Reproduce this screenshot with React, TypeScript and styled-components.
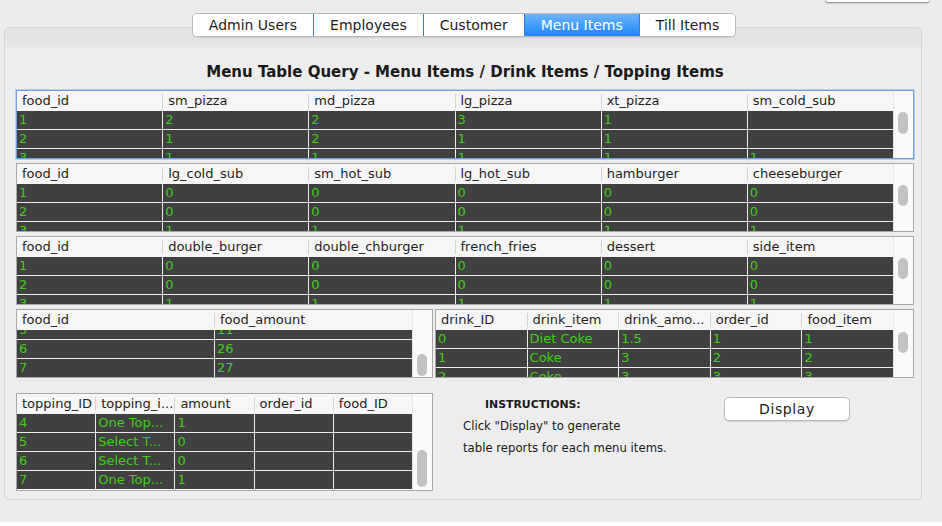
import React from "react";
import styled, { createGlobalStyle } from "styled-components";

const GlobalStyle = createGlobalStyle`
  html, body { margin: 0; padding: 0; }
  body { background: #ffffff; font-family: "DejaVu Sans", Verdana, sans-serif; }
  * { box-sizing: border-box; }
`;

const Window = styled.div`
  width: 942px;
  height: 522px;
  background: #ececec;
  display: flex;
  flex-direction: column;
  padding: 0 12px 22px 4px;
  overflow: hidden;
`;

const TopStrip = styled.div`
  flex: none;
  height: 13px;
  display: flex;
  justify-content: flex-end;
`;

const CutButton = styled.div`
  width: 105px;
  height: 3px;
  background: #ffffff;
  border-bottom: 1px solid #9c9c9c;
  border-left: 1px solid #c4c4c4;
  border-right: 1px solid #c4c4c4;
  border-radius: 0 0 4px 4px;
  box-shadow: 0 1px 1px rgba(0, 0, 0, 0.12);
`;

const TabBar = styled.div`
  flex: none;
  display: flex;
  justify-content: center;
  position: relative;
  z-index: 1;
  height: 24px;
  margin-right: 6px;
`;

const TabGroup = styled.div`
  display: flex;
  background: #ffffff;
  border: 1px solid #b8b8b8;
  border-radius: 5px;
  overflow: hidden;
  box-shadow: 0 1px 1px rgba(0, 0, 0, 0.08);
`;

const Tab = styled.div<{ $active?: boolean }>`
  display: flex;
  align-items: center;
  padding: 0 16px;
  font-size: 14px;
  color: ${(p) => (p.$active ? "#ffffff" : "#1c1c1c")};
  background: ${(p) => (p.$active ? "linear-gradient(#6cb4fb, #1f86f8)" : "#ffffff")};
  & + & {
    border-left: 1px solid ${(p) => (p.$active ? "#2a7fe0" : "#d2d2d2")};
  }
`;

const Panel = styled.div`
  flex: 1;
  min-height: 0;
  margin-top: -10px;
  margin-right: 8px;
  border: 1px solid #d4d4d4;
  border-radius: 5px;
  background: linear-gradient(#e3e3e3 0px, #e5e5e5 19px, #ededed 20px, #ededed 100%);
  padding: 0 7px 7px 11px;
  display: flex;
  flex-direction: column;
`;

const Title = styled.div`
  flex: none;
  margin-top: 34px;
  height: 20px;
  line-height: 20px;
  text-align: center;
  font-weight: bold;
  font-size: 15px;
  color: #1a1a1a;
`;

const Stack = styled.div`
  flex: none;
  margin-top: 8px;
  display: flex;
  flex-direction: column;
  gap: 4px;
`;

const Pair = styled.div`
  display: flex;
  gap: 2px;
`;

const BottomRow = styled.div`
  flex: none;
  margin-top: 15px;
  display: flex;
  align-items: flex-start;
`;

const Frame = styled.div<{ $focused?: boolean; $height: number; $width?: number; $grow?: boolean }>`
  display: flex;
  height: ${(p) => p.$height}px;
  flex: ${(p) => (p.$grow ? "1 1 0" : "none")};
  ${(p) => (p.$width ? `width: ${p.$width}px;` : "")}
  border: 1px solid ${(p) => (p.$focused ? "#6f9fe0" : "#a8a8a8")};
  box-shadow: ${(p) => (p.$focused ? "0 0 0 1px #b3cef2" : "none")};
  background: #fafafa;
  min-width: 0;
  overflow: hidden;
`;

const TableMain = styled.div`
  flex: 1;
  min-width: 0;
  display: flex;
  flex-direction: column;
`;

const HeaderRow = styled.div<{ $cols: number }>`
  display: grid;
  grid-template-columns: repeat(${(p) => p.$cols}, 1fr);
  column-gap: 1px;
  height: 20px;
  flex: none;
  background: #f6f6f6;
`;

const HeaderCell = styled.div`
  position: relative;
  padding-left: 5px;
  font-size: 13px;
  line-height: 20px;
  color: #1e1e1e;
  white-space: nowrap;
  min-width: 0;
  &::after {
    content: "";
    position: absolute;
    right: -1px;
    top: 3px;
    bottom: 3px;
    width: 1px;
    background: #d3d3d3;
  }
`;

const Viewport = styled.div`
  flex: 1;
  min-height: 0;
  overflow: hidden;
`;

const BodyGrid = styled.div<{ $cols: number }>`
  display: grid;
  grid-template-columns: repeat(${(p) => p.$cols}, 1fr);
  gap: 1px;
  background: #ececec;
`;

const Cell = styled.div`
  height: 18px;
  background: #404040;
  color: #3fcf16;
  font-size: 13px;
  line-height: 18px;
  padding-left: 2px;
  white-space: nowrap;
  overflow: hidden;
  min-width: 0;
`;

const ScrollTrack = styled.div`
  width: 20px;
  flex: none;
  position: relative;
  background: #fafafa;
  border-left: 1px solid #e6e6e6;
`;

const Thumb = styled.div`
  position: absolute;
  left: 4px;
  width: 10px;
  border-radius: 5px;
  background: #c2c2c2;
`;

const Instructions = styled.div`
  margin-left: 30px;
  padding-top: 2px;
  width: 261px;
  flex: none;
  color: #1a1a1a;
  font-size: 11.7px;
`;

const InstrHead = styled.div`
  padding-left: 22px;
  font-weight: bold;
  font-size: 10.9px;
  line-height: 20px;
`;

const InstrLine = styled.div`
  line-height: 21.5px;
  padding-top: 0.5px;
`;

const DisplayButton = styled.button`
  flex: none;
  margin-top: 4px;
  width: 126px;
  height: 24px;
  background: #ffffff;
  border: 1px solid #b9b9b9;
  border-radius: 5px;
  box-shadow: 0 1px 1px rgba(0, 0, 0, 0.1);
  font-family: "DejaVu Sans", Verdana, sans-serif;
  font-size: 14px;
  letter-spacing: 0.6px;
  color: #1a1a1a;
  padding: 0;
`;

type TableProps = {
  columns: string[];
  rows: string[][];
  height: number;
  width?: number;
  grow?: boolean;
  focused?: boolean;
  scroll: number;
  thumbTop: number;
  thumbHeight: number;
};

function DataTable({ columns, rows, height, width, grow, focused, scroll, thumbTop, thumbHeight }: TableProps) {
  return (
    <Frame $height={height} $width={width} $grow={grow} $focused={focused}>
      <TableMain>
        <HeaderRow $cols={columns.length}>
          {columns.map((c) => (
            <HeaderCell key={c}>{c}</HeaderCell>
          ))}
        </HeaderRow>
        <Viewport>
          <BodyGrid $cols={columns.length} style={{ marginTop: -scroll }}>
            {rows.map((r, i) => r.map((v, j) => <Cell key={i + "-" + j}>{v}</Cell>))}
          </BodyGrid>
        </Viewport>
      </TableMain>
      <ScrollTrack>
        <Thumb style={{ top: thumbTop, height: thumbHeight }} />
      </ScrollTrack>
    </Frame>
  );
}

const pizzaRows = [
  ["1", "2", "2", "3", "1", ""],
  ["2", "1", "2", "1", "1", ""],
  ["3", "1", "1", "1", "1", "1"],
];
const zeroRows = [
  ["1", "0", "0", "0", "0", "0"],
  ["2", "0", "0", "0", "0", "0"],
  ["3", "1", "1", "1", "1", "1"],
];
const amountRows = [
  ["1", "20"],
  ["2", "21"],
  ["3", "22"],
  ["4", "15"],
  ["5", "11"],
  ["6", "26"],
  ["7", "27"],
];
const drinkRows = [
  ["0", "Diet Coke", "1.5", "1", "1"],
  ["1", "Coke", "3", "2", "2"],
  ["2", "Coke", "3", "3", "3"],
];
const toppingRows = [
  ["1", "One Top...", "1", "", ""],
  ["2", "Select T...", "0", "", ""],
  ["3", "One Top...", "1", "", ""],
  ["4", "One Top...", "1", "", ""],
  ["5", "Select T...", "0", "", ""],
  ["6", "Select T...", "0", "", ""],
  ["7", "One Top...", "1", "", ""],
];

export default function App() {
  return (
    <>
      <GlobalStyle />
      <Window>
        <TopStrip>
          <CutButton />
        </TopStrip>
        <TabBar>
          <TabGroup>
            <Tab>Admin Users</Tab>
            <Tab>Employees</Tab>
            <Tab>Customer</Tab>
            <Tab $active>Menu Items</Tab>
            <Tab>Till Items</Tab>
          </TabGroup>
        </TabBar>
        <Panel>
          <Title>Menu Table Query - Menu Items / Drink Items / Topping Items</Title>
          <Stack>
            <DataTable
              focused
              height={69}
              columns={["food_id", "sm_pizza", "md_pizza", "lg_pizza", "xt_pizza", "sm_cold_sub"]}
              rows={pizzaRows}
              scroll={0}
              thumbTop={21}
              thumbHeight={22}
            />
            <DataTable
              height={69}
              columns={["food_id", "lg_cold_sub", "sm_hot_sub", "lg_hot_sub", "hamburger", "cheeseburger"]}
              rows={zeroRows}
              scroll={0}
              thumbTop={21}
              thumbHeight={21}
            />
            <DataTable
              height={69}
              columns={["food_id", "double_burger", "double_chburger", "french_fries", "dessert", "side_item"]}
              rows={zeroRows}
              scroll={0}
              thumbTop={21}
              thumbHeight={21}
            />
            <Pair>
              <DataTable
                width={417}
                height={69}
                columns={["food_id", "food_amount"]}
                rows={amountRows}
                scroll={85}
                thumbTop={44}
                thumbHeight={22}
              />
              <DataTable
                grow
                height={69}
                columns={["drink_ID", "drink_item", "drink_amo...", "order_id", "food_item"]}
                rows={drinkRows}
                scroll={0}
                thumbTop={22}
                thumbHeight={21}
              />
            </Pair>
          </Stack>
          <BottomRow>
            <DataTable
              width={417}
              height={98}
              columns={["topping_ID", "topping_i...", "amount", "order_id", "food_ID"]}
              rows={toppingRows}
              scroll={57}
              thumbTop={56}
              thumbHeight={37}
            />
            <Instructions>
              <InstrHead>INSTRUCTIONS:</InstrHead>
              <InstrLine>Click "Display" to generate</InstrLine>
              <InstrLine>table reports for each menu items.</InstrLine>
            </Instructions>
            <DisplayButton>Display</DisplayButton>
          </BottomRow>
        </Panel>
      </Window>
    </>
  );
}
